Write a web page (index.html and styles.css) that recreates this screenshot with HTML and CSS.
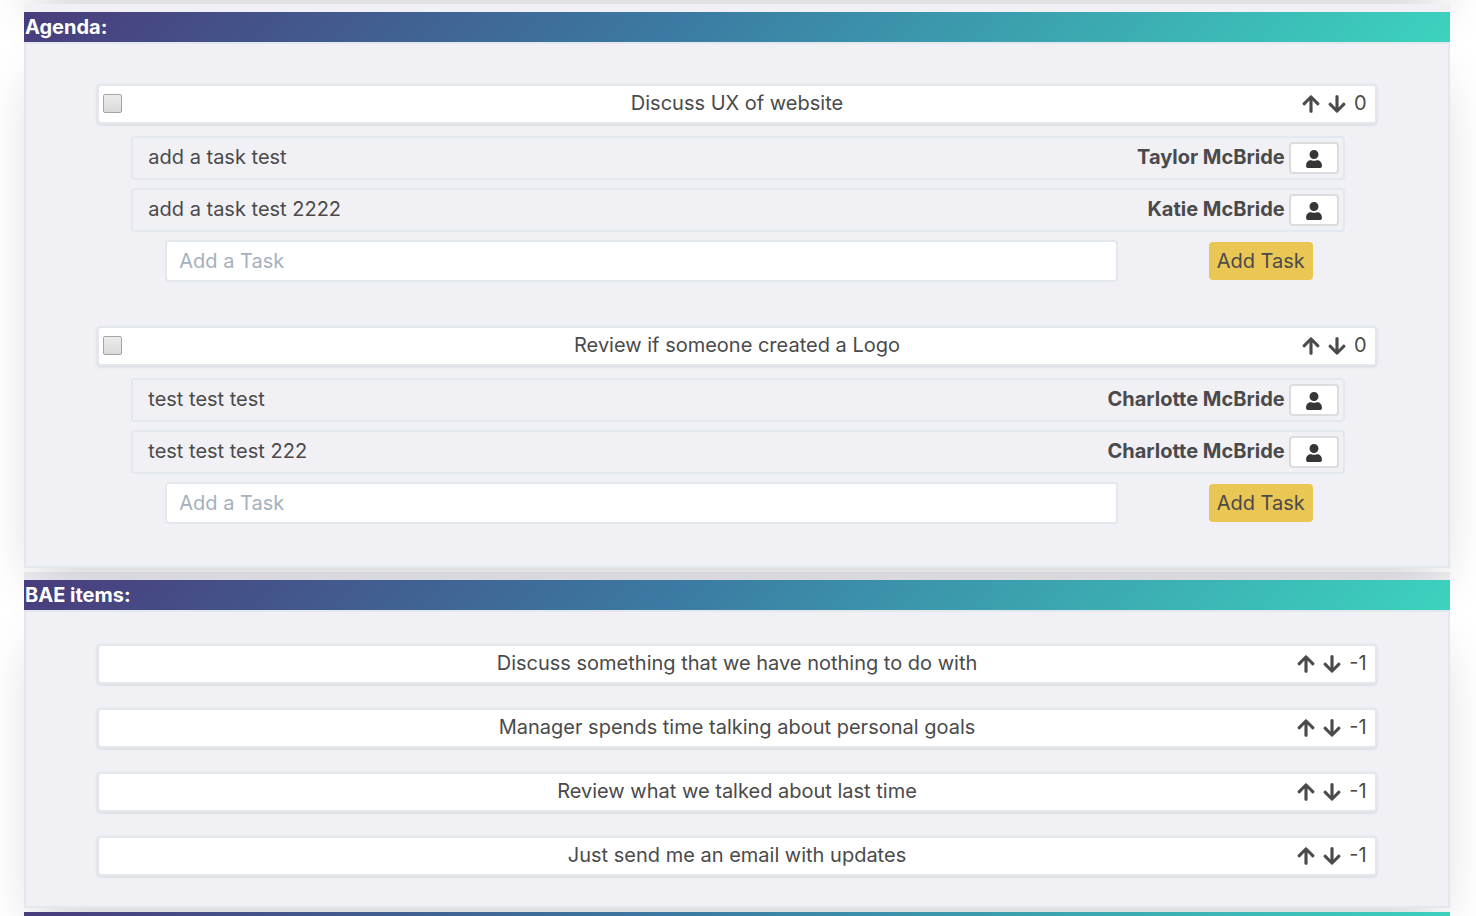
FILE: index.html
```
<!DOCTYPE html>
<html lang="en">
<head>
<meta charset="utf-8">
<title>Meeting agenda</title>
<link rel="stylesheet" href="styles.css">
</head>
<body>
<svg class="sprite" aria-hidden="true">
  <symbol id="up" viewBox="0 0 448 512"><path d="M34.9 289.5l-22.2-22.2c-9.4-9.4-9.4-24.6 0-33.9L207 39c9.4-9.4 24.6-9.4 33.9 0l194.3 194.3c9.4 9.4 9.4 24.6 0 33.9L413 289.4c-9.5 9.5-25 9.3-34.3-.4L264 168.6V456c0 13.3-10.7 24-24 24h-32c-13.3 0-24-10.7-24-24V168.6L69.2 289.1c-9.3 9.8-24.8 10-34.3.4z"/></symbol>
  <symbol id="down" viewBox="0 0 448 512"><path d="M413.1 222.5l22.2 22.2c9.4 9.4 9.4 24.6 0 33.9L241 473c-9.4 9.4-24.6 9.4-33.9 0L12.7 278.6c-9.4-9.4-9.4-24.6 0-33.9l22.2-22.2c9.5-9.4 25-9.3 34.3.4L184 343.4V56c0-13.3 10.7-24 24-24h32c13.3 0 24 10.7 24 24v287.4l114.8-120.5c9.3-9.8 24.8-10 34.3-.4z"/></symbol>
  <symbol id="user" viewBox="0 0 448 512"><path d="M224 256c70.7 0 128-57.3 128-128S294.7 0 224 0 96 57.3 96 128s57.3 128 128 128zm89.6 32h-16.7c-22.2 10.2-46.9 16-72.9 16s-50.6-5.8-72.9-16h-16.7C60.2 288 0 348.2 0 422.4V464c0 26.5 21.5 48 48 48h352c26.5 0 48-21.5 48-48v-41.6c0-74.2-60.2-134.4-134.4-134.4z"/></symbol>
</svg>
<div class="viewport">
<main class="page">
  <section class="section"><div class="panel panel-previous"></div></section>

  <section class="section section-agenda">
    <h2 class="title">Agenda:</h2>
    <div class="panel panel-agenda">
      <article class="group">
        <div class="item">
          <input class="check" type="checkbox" aria-label="Discuss UX of website">
          <span class="item-name">Discuss UX of website</span>
          <span class="votes"><button class="vote" aria-label="Vote up"><svg class="arrow"><use href="#up"/></svg></button><button class="vote" aria-label="Vote down"><svg class="arrow"><use href="#down"/></svg></button><span>0</span></span>
        </div>
        <ul class="tasks">
          <li class="task"><span class="task-name">add a task test</span><strong>Taylor McBride</strong><button class="assign" aria-label="Assign person"><svg class="user"><use href="#user"/></svg></button></li>
          <li class="task"><span class="task-name">add a task test 2222</span><strong>Katie McBride</strong><button class="assign" aria-label="Assign person"><svg class="user"><use href="#user"/></svg></button></li>
        </ul>
        <form class="add"><input class="field" type="text" placeholder="Add a Task" aria-label="Add a Task"><button class="add-button" type="button">Add Task</button></form>
      </article>
      <article class="group">
        <div class="item">
          <input class="check" type="checkbox" aria-label="Review if someone created a Logo">
          <span class="item-name">Review if someone created a Logo</span>
          <span class="votes"><button class="vote" aria-label="Vote up"><svg class="arrow"><use href="#up"/></svg></button><button class="vote" aria-label="Vote down"><svg class="arrow"><use href="#down"/></svg></button><span>0</span></span>
        </div>
        <ul class="tasks">
          <li class="task"><span class="task-name">test test test</span><strong>Charlotte McBride</strong><button class="assign" aria-label="Assign person"><svg class="user"><use href="#user"/></svg></button></li>
          <li class="task"><span class="task-name">test test test 222</span><strong>Charlotte McBride</strong><button class="assign" aria-label="Assign person"><svg class="user"><use href="#user"/></svg></button></li>
        </ul>
        <form class="add"><input class="field" type="text" placeholder="Add a Task" aria-label="Add a Task"><button class="add-button" type="button">Add Task</button></form>
      </article>
    </div>
  </section>

  <section class="section section-bae">
    <h2 class="title">BAE items:</h2>
    <div class="panel panel-bae">
      <div class="item"><span class="item-name">Discuss something that we have nothing to do with</span><span class="votes"><button class="vote" aria-label="Vote up"><svg class="arrow"><use href="#up"/></svg></button><button class="vote" aria-label="Vote down"><svg class="arrow"><use href="#down"/></svg></button><span>-1</span></span></div>
      <div class="item"><span class="item-name">Manager spends time talking about personal goals</span><span class="votes"><button class="vote" aria-label="Vote up"><svg class="arrow"><use href="#up"/></svg></button><button class="vote" aria-label="Vote down"><svg class="arrow"><use href="#down"/></svg></button><span>-1</span></span></div>
      <div class="item"><span class="item-name">Review what we talked about last time</span><span class="votes"><button class="vote" aria-label="Vote up"><svg class="arrow"><use href="#up"/></svg></button><button class="vote" aria-label="Vote down"><svg class="arrow"><use href="#down"/></svg></button><span>-1</span></span></div>
      <div class="item"><span class="item-name">Just send me an email with updates</span><span class="votes"><button class="vote" aria-label="Vote up"><svg class="arrow"><use href="#up"/></svg></button><button class="vote" aria-label="Vote down"><svg class="arrow"><use href="#down"/></svg></button><span>-1</span></span></div>
    </div>
  </section>

  <section class="section"><div class="title title-next"></div></section>
</main>
</div>
</body>
</html>
```
FILE: styles.css
```
* { box-sizing: border-box; }
body {
  margin: 0;
  background: #fff;
  color: #4a4a4a;
  font: 20px/30px Inter, "Liberation Sans", sans-serif;
}
button, input { font: inherit; color: inherit; }
button { cursor: pointer; }
svg { display: block; fill: currentColor; }
.sprite { position: absolute; width: 0; height: 0; }

.viewport { height: 100vh; overflow: hidden; }
.page {
  display: flex;
  flex-direction: column;
  gap: 4px;
  margin-top: -240px;
  padding: 0 26px 0 24px;
}
.section-agenda { position: relative; padding-top: 8px; background: #f1f0f5; }
.section-bae { padding-top: 8px; background: #f1f0f5; }

.title {
  position: relative;
  z-index: 2;
  margin: 0;
  padding-left: 1px;
  min-height: 30px;
  background: linear-gradient(135deg, #493c7c, #3b7ba3 46%, #3cd3be);
  color: #fff;
  font-size: 20px;
  font-weight: 700;
  line-height: 30px;
}
.panel {
  position: relative;
  display: flex;
  flex-direction: column;
  border: 2px solid #e3e7ee;
  background: #f1f0f5;
  box-shadow: 0 25px 50px -12px rgba(0, 0, 0, .18);
}
.panel-previous { height: 240px; }
.panel-agenda { gap: 44px; padding: 40px 5% 42px; }
.panel-bae { z-index: 1; gap: 24px; padding: 32px 5% 30px; }

.item {
  display: grid;
  grid-template-columns: 1fr auto 1fr;
  align-items: center;
  height: 40px;
  padding: 0 4px 2px;
  border: 2px solid #e2e8ee;
  border-radius: 4px;
  background: #fff;
  box-shadow: 0 1px 3px rgba(0, 0, 0, .12);
}
.check {
  appearance: none;
  width: 19px;
  height: 19px;
  margin: 0;
  border: 1px solid #a5a5a8;
  border-radius: 2px;
  background: linear-gradient(#ececec, #dadada);
}
.item-name { grid-column: 2; }
.votes {
  grid-column: 3;
  justify-self: end;
  display: flex;
  align-items: center;
  gap: 8px;
  margin-right: 4px;
}
.vote { padding: 2px 0 0; border: 0; background: none; }
.arrow { width: 18px; height: 20px; }

.tasks {
  display: flex;
  flex-direction: column;
  gap: 8px;
  margin: 12px 32px 8px 34px;
  padding: 0;
  list-style: none;
}
.task {
  display: flex;
  align-items: center;
  gap: 4px;
  height: 44px;
  padding: 0 4px 0 15px;
  border: 2px solid #e3e8ee;
  border-radius: 4px;
}
.task-name { flex: 1; }
.task-name, .task strong { padding-bottom: 2px; }
.task strong { font-weight: 700; }
.assign {
  display: flex;
  align-items: center;
  justify-content: center;
  width: 50px;
  height: 32px;
  padding: 2px 0 0;
  border: 2px solid #dcdcde;
  border-radius: 4px;
  background: #fff;
  color: #363636;
}
.user { width: 16px; height: 18px; }

.add {
  display: flex;
  align-items: center;
  justify-content: space-between;
  margin: 0 64px 0 68px;
}
.field {
  width: 83%;
  height: 42px;
  padding: 0 12px;
  border: 2px solid #e2e8ee;
  border-radius: 4px;
  background: #fff;
}
.field::placeholder { color: #a5b0be; opacity: 1; }
.add-button {
  width: 104px;
  height: 38px;
  padding: 0;
  border: 0;
  border-radius: 4px;
  background: #eac655;
  white-space: nowrap;
}
```
